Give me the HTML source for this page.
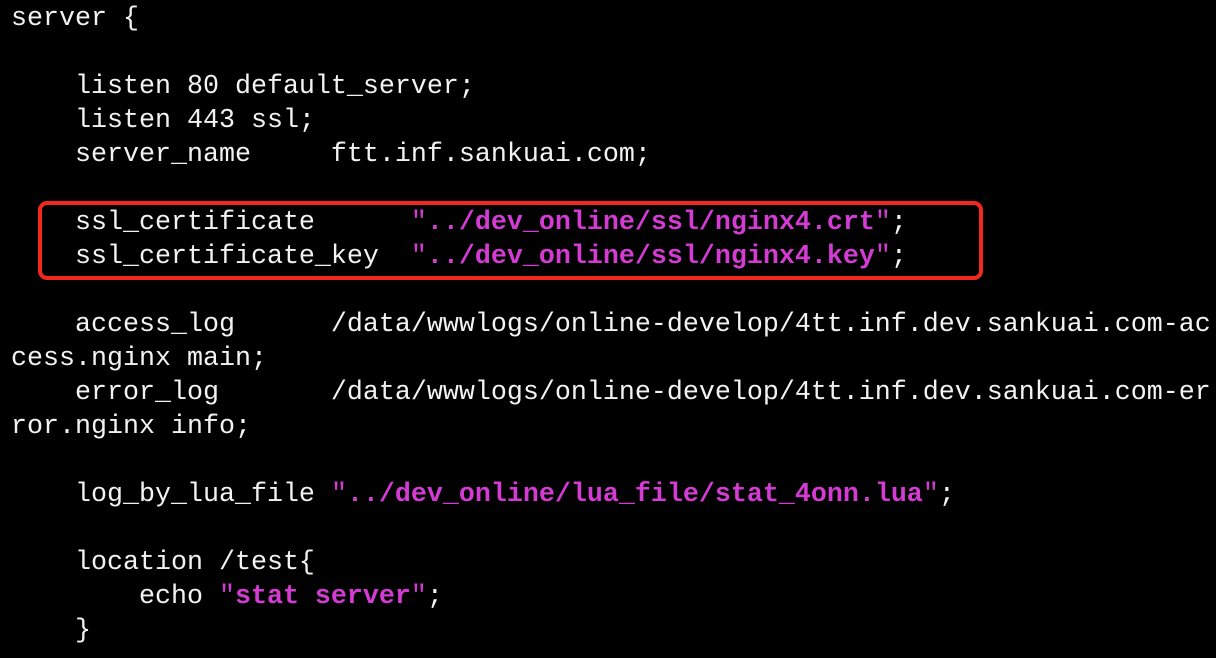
<!DOCTYPE html>
<html><head><meta charset="utf-8"><style>
html,body{margin:0;padding:0;background:#000;width:1216px;height:658px;overflow:hidden}
pre{margin:0;position:absolute;left:11px;top:2px;font-family:"Liberation Mono",monospace;font-size:26.67px;line-height:34px;color:#f2f2f2;white-space:pre}
.s{color:#d33bd3;font-weight:bold}
.q{color:#d33bd3}
.box{position:absolute;left:38px;top:201px;width:937px;height:71px;border:4px solid #f0281e;border-radius:9px}
</style></head><body>
<pre>server {

    listen 80 default_server;
    listen 443 ssl;
    server_name     ftt.inf.sankuai.com;

    ssl_certificate      <span class="q">"</span><span class="s">../dev_online/ssl/nginx4.crt</span><span class="q">"</span>;
    ssl_certificate_key  <span class="q">"</span><span class="s">../dev_online/ssl/nginx4.key</span><span class="q">"</span>;

    access_log      /data/wwwlogs/online-develop/4tt.inf.dev.sankuai.com-ac
cess.nginx main;
    error_log       /data/wwwlogs/online-develop/4tt.inf.dev.sankuai.com-er
ror.nginx info;

    log_by_lua_file <span class="q">"</span><span class="s">../dev_online/lua_file/stat_4onn.lua</span><span class="q">"</span>;

    location /test{
        echo <span class="q">"</span><span class="s">stat server</span><span class="q">"</span>;
    }</pre>
<div class="box"></div>
</body></html>
